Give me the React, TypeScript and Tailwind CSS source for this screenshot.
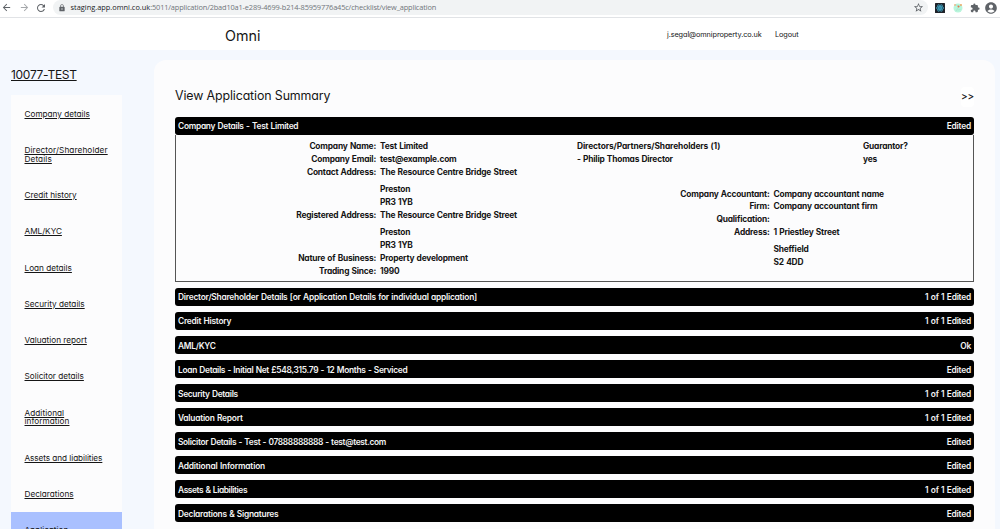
import { MdAccountCircle, MdArrowBack, MdArrowForward, MdExtension, MdLock, MdRefresh, MdStarBorder } from "react-icons/md";

type Step = { lines: string[]; tracking?: string };

const steps: Step[] = [
  { lines: ["Company details"] },
  { lines: ["Director/Shareholder", "Details"], tracking: "tracking-[0.11px]" },
  { lines: ["Credit history"] },
  { lines: ["AML/KYC"], tracking: "tracking-[0px]" },
  { lines: ["Loan details"] },
  { lines: ["Security details"] },
  { lines: ["Valuation report"] },
  { lines: ["Solicitor details"] },
  { lines: ["Additional", "information"], tracking: "tracking-[0.06px]" },
  { lines: ["Assets and liabilities"], tracking: "tracking-[-0.06px]" },
  { lines: ["Declarations"] },
];

type Section = { title: string; status: string; tracking?: string };

const sections: Section[] = [
  {
    title: "Director/Shareholder Details [or Application Details for individual application]",
    status: "1 of 1 Edited",
    tracking: "tracking-[-0.23px]",
  },
  { title: "Credit History", status: "1 of 1 Edited", tracking: "tracking-[-0.25px]" },
  { title: "AML/KYC", status: "Ok", tracking: "tracking-[-0.25px]" },
  {
    title: "Loan Details - Initial Net £548,315.79 - 12 Months - Serviced",
    status: "Edited",
    tracking: "tracking-[-0.31px]",
  },
  { title: "Security Details", status: "1 of 1 Edited", tracking: "tracking-[-0.31px]" },
  { title: "Valuation Report", status: "1 of 1 Edited", tracking: "tracking-[-0.24px]" },
  {
    title: "Solicitor Details - Test - 07888888888 - test@test.com",
    status: "Edited",
    tracking: "tracking-[-0.34px]",
  },
  { title: "Additional Information", status: "Edited", tracking: "tracking-[-0.19px]" },
  { title: "Assets & Liabilities", status: "1 of 1 Edited", tracking: "tracking-[-0.4px]" },
  { title: "Declarations & Signatures", status: "Edited", tracking: "tracking-[-0.24px]" },
];

const company: [string, string[]][] = [
  ["Company Name:", ["Test Limited"]],
  ["Company Email:", ["test@example.com"]],
  ["Contact Address:", ["The Resource Centre Bridge Street", "Preston", "PR3 1YB"]],
  ["Registered Address:", ["The Resource Centre Bridge Street", "Preston", "PR3 1YB"]],
  ["Nature of Business:", ["Property development"]],
  ["Trading Since:", ["1990"]],
];

const accountant: [string, string[]][] = [
  ["Company Accountant:", ["Company accountant name"]],
  ["Firm:", ["Company accountant firm"]],
  ["Qualification:", [""]],
  ["Address:", ["1 Priestley Street", "Sheffield", "S2 4DD"]],
];

function Bar({ title, status, tracking = "tracking-[-0.2px]" }: Section) {
  return (
    <div className="flex h-[17.6px] shrink-0 items-center justify-between rounded-[3px] bg-black px-[3px] pt-[1.6px] text-[8.4px] font-semibold text-[#f4f4f4] [word-spacing:0.5px]">
      <span className={tracking}>{title}</span>
      <span className="tracking-[-0.22px]">{status}</span>
    </div>
  );
}

function Facts({ rows }: { rows: [string, string[]][] }) {
  return (
    <dl>
      {rows.map(([label, values]) => (
        <div key={label} className="flex gap-[4px]">
          <dt className="w-[200px] shrink-0 text-right">{label}</dt>
          <dd className="flex flex-col">
            {values.map((value, i) => (
              <span key={i} className={i === 1 ? "mt-[4.3px] h-[12.84px]" : "h-[12.84px]"}>
                {value}
              </span>
            ))}
          </dd>
        </div>
      ))}
    </dl>
  );
}

function BrowserBar() {
  return (
    <div className="flex h-[18px] shrink-0 items-center border-b border-[#e1e3e6] bg-white pb-[2px] text-[#5f6368]">
      <MdArrowBack className="ml-[1px] size-[11px]" />
      <MdArrowForward className="ml-[6.5px] size-[11px] text-[#a5a8ab]" />
      <MdRefresh className="ml-[5.5px] size-[12px]" />
      <div className="ml-[6px] flex h-[15px] w-[875px] items-center rounded-full bg-[#f1f3f4] pl-[5px]">
        <MdLock className="size-[8px]" />
        <span className="ml-[4.5px] font-['Open_Sans',sans-serif] text-[7.4px] tracking-[-0.155px] whitespace-nowrap text-[#70757a]">
          <span className="tracking-[0px] text-[#202124]">staging.app.omni.co.uk</span>
          :5011/application/2bad10a1-e289-4699-b214-85959776a45c/checklist/view_application
        </span>
        <MdStarBorder className="mr-[4px] ml-auto size-[11px]" />
      </div>
      <svg className="ml-[7px] size-[10px]" viewBox="0 0 20 20">
        <rect width="20" height="20" rx="1" fill="#20232a" />
        <g fill="none" stroke="#3fa9c9" strokeWidth="1.5">
          <ellipse cx="10" cy="10" rx="7.5" ry="3" />
          <ellipse cx="10" cy="10" rx="7.5" ry="3" transform="rotate(60 10 10)" />
          <ellipse cx="10" cy="10" rx="7.5" ry="3" transform="rotate(120 10 10)" />
        </g>
        <circle cx="10" cy="10" r="2" fill="#3fa9c9" />
      </svg>
      <svg className="ml-[8px] size-[10px]" viewBox="0 0 20 20">
        <circle cx="10" cy="10" r="9" fill="#b9f5dc" />
        <path d="M5 3l7 4-6 9M12 7l4-2M9 14l6-1" fill="none" stroke="#9be0c4" strokeWidth="1.2" />
        <circle cx="4" cy="4" r="1.8" fill="#f5b183" />
        <circle cx="11" cy="7" r="2" fill="#e8744a" />
        <circle cx="16" cy="4" r="1.8" fill="#f2a25c" />
      </svg>
      <MdExtension className="ml-[6.5px] size-[10px]" />
      <MdAccountCircle className="ml-[4.5px] size-[14px] shrink-0" />
    </div>
  );
}

export default function App() {
  return (
    <div className="flex h-[529px] w-[1000px] flex-col overflow-hidden bg-[#f4f8fe] font-['Inter','Lato',sans-serif] text-[#151515] [font-feature-settings:'cv11','ss03']">
      <BrowserBar />
      <header className="flex h-[32px] shrink-0 items-center bg-white pt-[3px]">
        <h1 className="ml-[225px] w-[442px] text-[14.3px]">Omni</h1>
        <span className="w-[108px] text-[7.3px] tracking-[-0.09px]">j.segal@omniproperty.co.uk</span>
        <span className="text-[7.3px] tracking-[-0.08px]">Logout</span>
      </header>

      <div className="flex min-h-0 flex-1">
        <aside className="ml-[11px] flex w-[111px] shrink-0 flex-col">
          <a className="mt-[16px] h-[29px] shrink-0 text-[12px] leading-[17px] tracking-[-0.3px] whitespace-nowrap underline">
            10077-TEST
          </a>
          <nav className="flex shrink-0 flex-col bg-[#fcfcfd] pt-[0.5px] text-[8.2px] leading-[8.6px]">
            {steps.map(({ lines, tracking = "tracking-[0px]" }) => (
              <a
                key={lines[0]}
                className={`flex flex-col pt-[14.3px] pb-[13.4px] pl-[13.5px] whitespace-nowrap underline ${tracking}`}
              >
                {lines.map((line) => (
                  <span key={line}>{line}</span>
                ))}
              </a>
            ))}
            <a className="bg-[#a9c0ff] pt-[13.85px] pb-[13.85px] pl-[13.5px] underline">Application</a>
          </nav>
        </aside>

        <main className="mt-[10px] ml-[32px] flex w-[841px] shrink-0 flex-col rounded-t-[12px] bg-[#fcfcfd] px-[21px]">
          <div className="flex h-[57px] shrink-0 items-center justify-between pt-[16px]">
            <h2 className="text-[12.4px] tracking-[-0.12px]">View Application Summary</h2>
            <button className="h-[20px] rounded bg-white text-[10px] font-medium tracking-[-0.2px]">&gt;&gt;</button>
          </div>
          <Bar title="Company Details - Test Limited" status="Edited" tracking="tracking-[-0.28px]" />
          <div className="flex h-[147.4px] shrink-0 border border-t-0 border-[#555] pt-[5.9px] text-[8.4px] leading-[12.84px] font-bold tracking-[-0.2px] whitespace-nowrap [word-spacing:0.5px]">
            <div className="w-[401px] shrink-0">
              <Facts rows={company} />
            </div>
            <div className="flex flex-col">
              <div className="flex">
                <div className="w-[286px]">
                  <p className="tracking-[-0.12px]">Directors/Partners/Shareholders (1)</p>
                  <p>- Philip Thomas Director</p>
                </div>
                <div>
                  <p>Guarantor?</p>
                  <p>yes</p>
                </div>
              </div>
              <div className="mt-[21.4px] -ml-[7.5px]">
                <Facts rows={accountant} />
              </div>
            </div>
          </div>
          <div className="mt-[6.2px] flex flex-col gap-[6.44px]">
            {sections.map((section) => (
              <Bar key={section.title} {...section} />
            ))}
          </div>
        </main>
      </div>
    </div>
  );
}
